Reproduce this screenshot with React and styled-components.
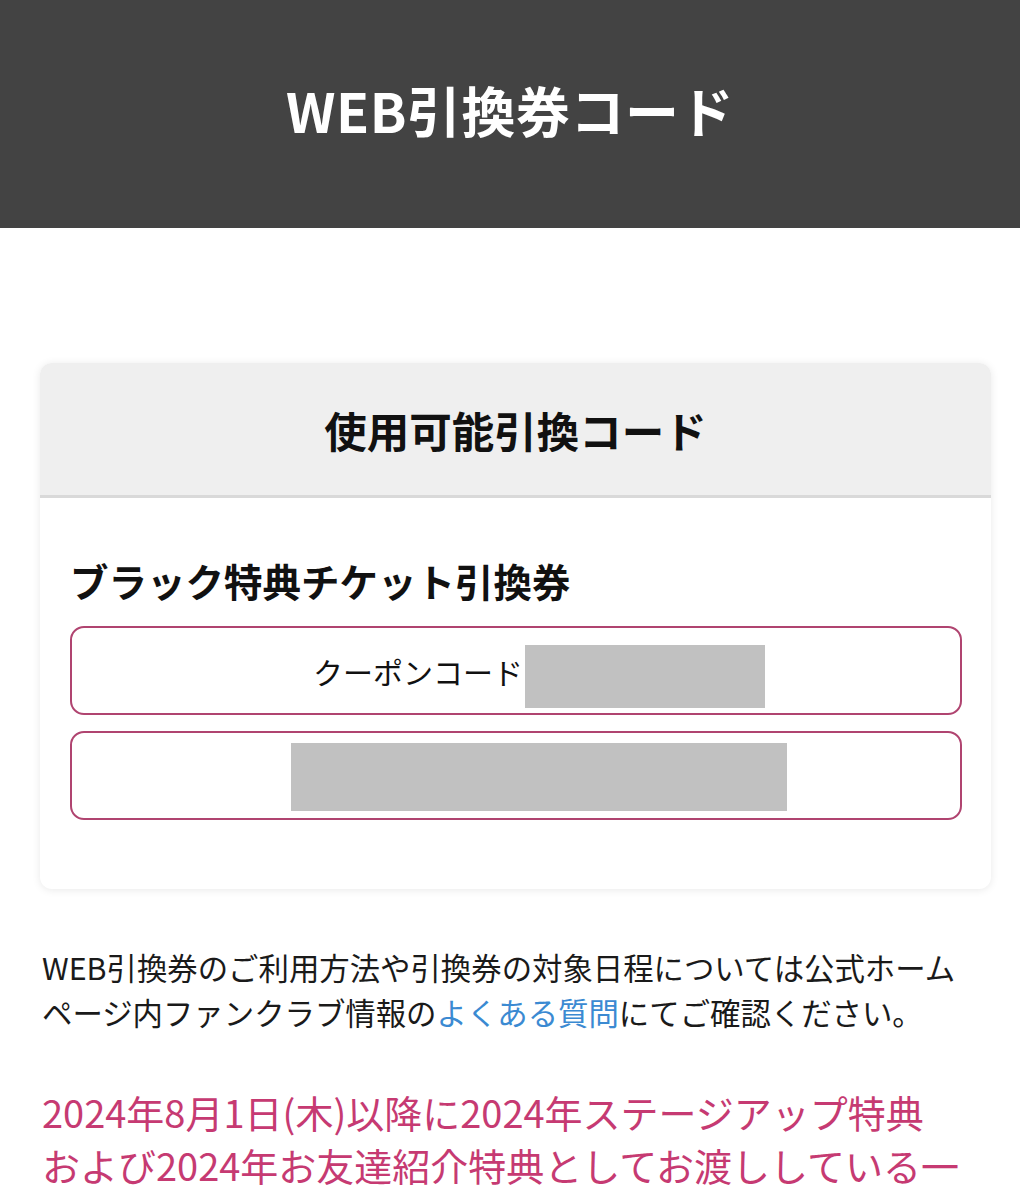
import React from 'react';
import styled, { createGlobalStyle } from 'styled-components';

const GlobalStyle = createGlobalStyle`
  body {
    margin: 0;
    background: #fff;
    font-family: "Noto Sans CJK JP", "Noto Sans", sans-serif;
    color: #1a1a1a;
  }
`;

function CouponRow({ label, blockWidth, blockHeight, top, bottom }) {
  return (
    <CouponBox $top={top} $bottom={bottom}>
      {label && <CouponLabel>{label}</CouponLabel>}
      <Masked $w={blockWidth} $h={blockHeight} />
    </CouponBox>
  );
}

export default function App() {
  return (
    <>
      <GlobalStyle />
      <Header>
        <HeaderTitle>WEB引換券コード</HeaderTitle>
      </Header>
      <Main>
        <Card>
          <CardHead>使用可能引換コード</CardHead>
          <CardBody>
            <TicketName>ブラック特典チケット引換券</TicketName>
            <CouponRow label="クーポンコード" blockWidth={240} blockHeight={63} top={17} bottom={5} />
            <CouponRow blockWidth={496} blockHeight={68} top={10} bottom={7} />
          </CardBody>
        </Card>
        <Note>
          WEB引換券のご利用方法や引換券の対象日程については公式ホーム<br />ページ内ファンクラブ情報の<FaqLink href="#">よくある質問</FaqLink>にてご確認ください。
        </Note>
        <Notice>
          2024年8月1日(木)以降に2024年ステージアップ特典
          <br />
          および2024年お友達紹介特典としてお渡ししている一
        </Notice>
      </Main>
    </>
  );
}

const Header = styled.header`
  height: 228px;
  background: #434343;
  display: flex;
  align-items: center;
  justify-content: center;
`;

const HeaderTitle = styled.h1`
  margin: 0 0 10px;
  color: #fff;
  font-size: 54px;
  font-weight: 700;
  letter-spacing: 0.5px;
`;

const Main = styled.main`
  padding: 135px 42px 0 40px;
`;

const Card = styled.section`
  width: 951px;
  border-radius: 12px;
  background: #fff;
  box-shadow: 0 1px 8px rgba(0, 0, 0, 0.09);
  overflow: hidden;
`;

const CardHead = styled.h2`
  margin: 0;
  height: 132px;
  display: flex;
  align-items: center;
  justify-content: center;
  background: #efefef;
  border-bottom: 3px solid #d9d9d9;
  font-size: 42.5px;
  font-weight: 700;
  color: #111;
`;

const CardBody = styled.div`
  padding: 56px 29px 69px 30px;
  display: flex;
  flex-direction: column;
  gap: 16px;
`;

const TicketName = styled.h3`
  margin: 0 0 3px;
  font-size: 38.5px;
  line-height: 53px;
  font-weight: 700;
  color: #111;
`;

const CouponBox = styled.div`
  height: 89px;
  box-sizing: border-box;
  border: 2px solid #b04470;
  border-radius: 14px;
  padding: ${(p) => p.$top}px 0 ${(p) => p.$bottom}px 46px;
  display: flex;
  align-items: center;
  justify-content: center;
`;

const CouponLabel = styled.span`
  font-size: 30px;
  color: #111;
  margin-right: 2px;
  position: relative;
  top: -6px;
`;

const Masked = styled.span`
  display: block;
  width: ${(p) => p.$w}px;
  height: ${(p) => p.$h}px;
  background: #c1c1c1;
`;

const Note = styled.p`
  margin: 56px 0 0 2px;
  font-size: 30.4px;
  line-height: 45px;
  color: #1a1a1a;
  white-space: nowrap;
`;

const FaqLink = styled.a`
  color: #3b8ad2;
  text-decoration: none;
`;

const Notice = styled.p`
  margin: 50px 0 0 2px;
  font-size: 38px;
  line-height: 53px;
  color: #c63a72;
  white-space: nowrap;
`;
